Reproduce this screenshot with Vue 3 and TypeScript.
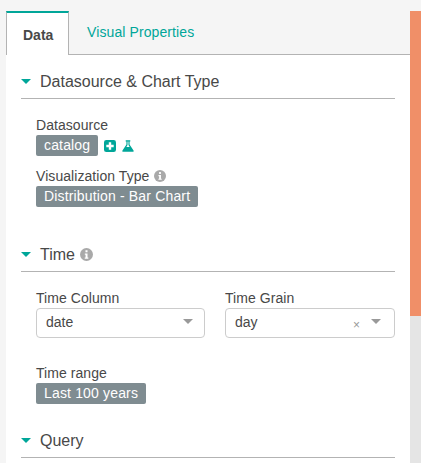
<template>
  <div class="page">
    <div class="panel">
      <div class="tabs">
        <div class="tab active">Data</div>
        <div class="tab">Visual Properties</div>
      </div>
      <div class="content">
        <section v-for="section in sections" :key="section.title" class="section">
          <h4 class="section-head">
            <span class="caret"></span>
            <span>{{ section.title }}</span>
            <svg v-if="section.info" class="info big" viewBox="0 0 14 14"><circle cx="7" cy="7" r="7" /><rect x="5.9" y="2.4" width="2.2" height="2.2" fill="#fff" /><path d="M5.2 5.8h2.9v4.3h.9v1.400H5.100v-1.400h.9V7.200H5.200z" fill="#fff" /></svg>
          </h4>

          <div v-if="section.title === 'Datasource & Chart Type'" class="section-body first">
            <div class="field">
              <div class="label">Datasource</div>
              <div class="tag-row">
                <span class="tag">catalog</span>
                <svg class="icon-plus" viewBox="0 0 13 13"><rect width="13" height="13" rx="2.500" fill="#00a699" /><path d="M5.200 2.500h2.600v2.700h2.700v2.600H7.800v2.700H5.200V7.800H2.500V5.200h2.700z" fill="#fff" /></svg>
                <svg class="icon-flask" viewBox="0 0 13 13"><path d="M4 .4h5v1.200h-.8v3.400l4.300 6.300c.4.700 0 1.400-.8 1.400H1.300c-.8 0-1.200-.7-.8-1.400L4.800 5V1.600H4zM6 1.600v3.900L4.700 7.500h3.600L7 5.500V1.600z" fill="#00a699" fill-rule="evenodd" /></svg>
              </div>
            </div>
            <div class="field">
              <div class="label">Visualization Type<svg class="info" viewBox="0 0 14 14"><circle cx="7" cy="7" r="7" /><rect x="5.9" y="2.4" width="2.2" height="2.2" fill="#fff" /><path d="M5.2 5.8h2.900v4.300h.9v1.400H5.100v-1.400h.9V7.200H5.200z" fill="#fff" /></svg></div>
              <div class="tag-row"><span class="tag">Distribution - Bar Chart</span></div>
            </div>
          </div>

          <div v-else-if="section.title === 'Time'" class="section-body">
            <div class="columns">
              <div>
                <div class="label">Time Column</div>
                <div class="select">
                  <span class="value">date</span>
                  <span class="arrow"></span>
                </div>
              </div>
              <div>
                <div class="label">Time Grain</div>
                <div class="select clearable">
                  <span class="value">day</span>
                  <span class="clear">×</span>
                  <span class="arrow"></span>
                </div>
              </div>
            </div>
            <div class="field range">
              <div class="label">Time range</div>
              <div class="tag-row"><span class="tag">Last 100 years</span></div>
            </div>
          </div>
        </section>
      </div>
    </div>
    <div class="scrollbar"><div class="thumb"></div></div>
  </div>
</template>

<script setup lang="ts">
interface Section {
  title: string
  info?: boolean
}

const sections: Section[] = [
  { title: 'Datasource & Chart Type' },
  { title: 'Time', info: true },
  { title: 'Query' },
]
</script>

<style>
html,
body {
  margin: 0;
  overflow: hidden;
}
</style>

<style scoped>
.page {
  display: flex;
  width: 421px;
  height: 463px;
  overflow: hidden;
  background: #f5f5f5;
  font-family: "Liberation Sans", Arial, sans-serif;
  font-size: 14px;
  color: #484848;
}

.panel {
  width: 410px;
  padding: 11px 0 0 6px;
  box-sizing: border-box;
}

.tabs {
  display: flex;
  height: 44px;
  box-sizing: border-box;
  border-bottom: 1px solid #b3b3b3;
}

.tab {
  padding: 13px 18px 0;
  color: #00a699;
  letter-spacing: 0.1px;
  box-sizing: border-box;
  height: 44px;
}

.tab.active {
  width: 63px;
  padding: 14px 0 0 16px;
  background: #fff;
  border: 1px solid #b3b3b3;
  border-top: 2px solid #00a699;
  border-bottom: 0;
  font-weight: 700;
  letter-spacing: 0;
  color: #484848;
}

.content {
  height: 408px;
  padding: 16px 15px 0;
  box-sizing: border-box;
  background: #fff;
}

.section-head {
  display: flex;
  align-items: center;
  height: 28px;
  padding-bottom: 6px;
  margin: 0;
  box-sizing: border-box;
  border-bottom: 1px solid #b3b3b3;
  font-size: 16px;
  font-weight: 400;
  line-height: 20px;
}

.caret {
  width: 0;
  height: 0;
  margin-right: 9px;
  border-left: 5px solid transparent;
  border-right: 5px solid transparent;
  border-top: 5px solid #00a699;
}

.section-body {
  padding: 17px 0 0 15px;
  margin-bottom: 26px;
}

.section-body.first {
  margin-bottom: 37px;
}

.field + .field {
  margin-top: 11px;
}

.label {
  height: 16px;
  line-height: 18px;
  letter-spacing: 0.06px;
  color: #484848;
}

.tag-row {
  display: flex;
  align-items: center;
  margin-top: 3px;
}

.tag {
  height: 21px;
  padding: 0 8px;
  border-radius: 2px;
  background: #7f8c91;
  color: #fff;
  letter-spacing: 0.16px;
  line-height: 21px;
}

.icon-plus {
  width: 12px;
  height: 12px;
  margin-left: 6px;
}

.icon-flask {
  width: 12px;
  height: 12px;
  margin-left: 6px;
}

.info {
  width: 12px;
  height: 12px;
  margin-left: 5px;
  vertical-align: -1px;
  fill: #a9a9a9;
}

.info.big {
  width: 13px;
  height: 13px;
  margin-left: 5px;
}

.columns {
  display: grid;
  grid-template-columns: 169px 170px;
  gap: 20px;
}

.select {
  display: flex;
  align-items: center;
  height: 30px;
  margin-top: 3px;
  padding: 0 11px 0 9px;
  box-sizing: border-box;
  border: 1px solid #ccc;
  border-radius: 4px;
}

.select.clearable {
  padding-right: 13px;
}

.value {
  flex: 1;
  margin-bottom: 2px;
  color: #484848;
}

.clear {
  margin-right: 11px;
  margin-top: 3px;
  color: #999;
  font-size: 12px;
}

.arrow {
  width: 0;
  height: 0;
  margin-bottom: 3px;
  border-left: 5px solid transparent;
  border-right: 5px solid transparent;
  border-top: 5px solid #999;
}

.range {
  margin-top: 26px;
}

.scrollbar {
  width: 11px;
  height: 452px;
  margin-top: 11px;
  background: #e5e5e5;
}

.thumb {
  height: 305px;
  background: #f08f68;
}
</style>
